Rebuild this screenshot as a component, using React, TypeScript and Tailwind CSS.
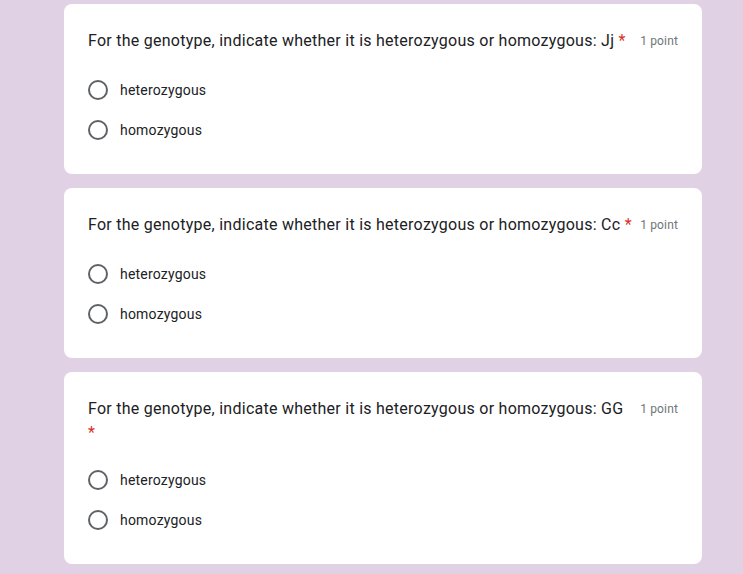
import { useState } from "react";

type Question = {
  id: string;
  title: string;
  options: string[];
  starOnNewLine?: boolean;
};

const questions: Question[] = [
  {
    id: "jj",
    title: "For the genotype, indicate whether it is heterozygous or homozygous: Jj",
    options: ["heterozygous", "homozygous"],
  },
  {
    id: "cc",
    title: "For the genotype, indicate whether it is heterozygous or homozygous: Cc",
    options: ["heterozygous", "homozygous"],
  },
  {
    id: "gg",
    title: "For the genotype, indicate whether it is heterozygous or homozygous: GG",
    options: ["heterozygous", "homozygous"],
    // wraps in the original layout
    starOnNewLine: true,
  },
];

export default function App() {
  const [answers, setAnswers] = useState<Record<string, string>>({});

  return (
    <div
      className="min-h-[574px] bg-[#e1d1e4] pt-[4px] pl-[64px]"
      style={{ fontFamily: "Roboto, 'Liberation Sans', sans-serif" }}
    >
      <div className="flex w-[638px] flex-col gap-[14px]">
        {questions.map((q) => (
          <QuestionCard
            key={q.id}
            question={q}
            value={answers[q.id]}
            onChange={(v) => setAnswers((prev) => ({ ...prev, [q.id]: v }))}
          />
        ))}
      </div>
    </div>
  );
}

function QuestionCard({
  question,
  value,
  onChange,
}: {
  question: Question;
  value?: string;
  onChange: (v: string) => void;
}) {
  return (
    <div className="rounded-lg bg-white px-6 pt-[25px] pb-6">
      <div className="flex items-start">
        <div className="flex-1 pr-1 text-[16px] leading-6 tracking-[0.26px] text-[#202124]">
          {question.title}
          {question.starOnNewLine ? <br /> : " "}
          <span className="text-[#d93025]">*</span>
        </div>
        <div className="shrink-0 text-[12px] leading-6 tracking-[0.15px] text-[#70757a]">
          1 point
        </div>
      </div>
      <div className={question.starOnNewLine ? "mt-[15px] flex flex-col" : "mt-[17px] flex flex-col"}>
        {question.options.map((opt) => (
          <button
            key={opt}
            type="button"
            onClick={() => onChange(opt)}
            className="flex h-10 items-center text-left"
          >
            <span className="flex h-5 w-5 items-center justify-center rounded-full border-2 border-[#5f6368]">
              {value === opt && (
                <span className="h-[10px] w-[10px] rounded-full bg-[#673ab7]" />
              )}
            </span>
            <span className="ml-3 text-[14px] tracking-[0.2px] text-[#202124]">
              {opt}
            </span>
          </button>
        ))}
      </div>
    </div>
  );
}
